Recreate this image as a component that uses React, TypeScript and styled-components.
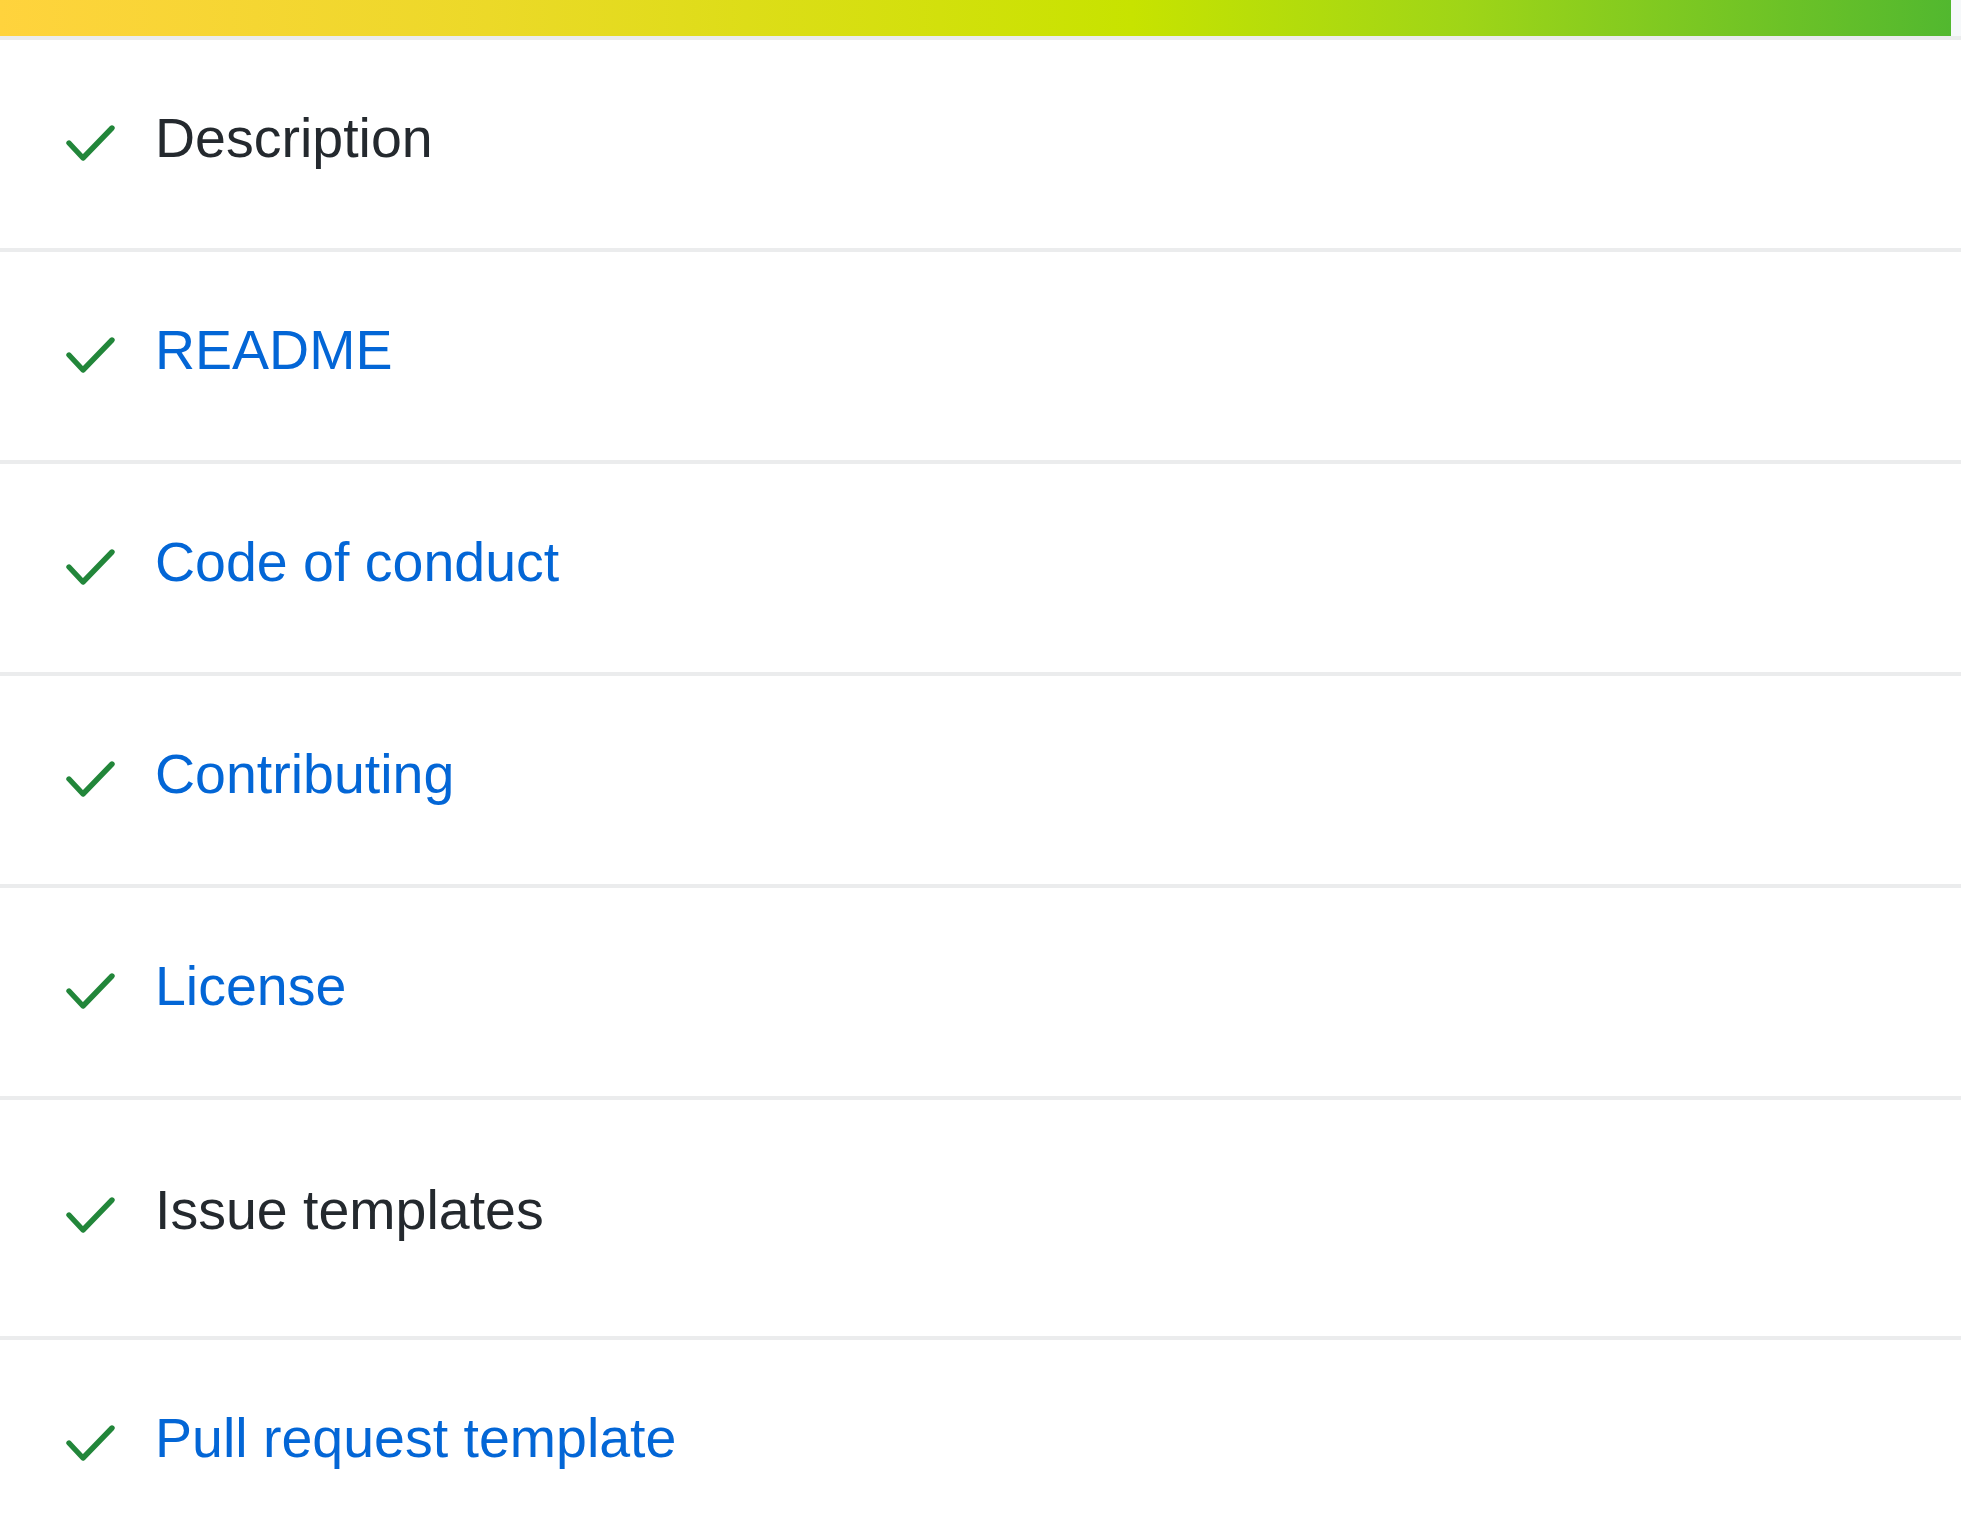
import React from "react";
import styled, { createGlobalStyle } from "styled-components";

const GlobalStyle = createGlobalStyle`
  html, body {
    margin: 0;
    padding: 0;
    background: #ffffff;
    font-family: "Liberation Sans", Arial, Helvetica, sans-serif;
  }
`;

const Page = styled.div`
  display: flex;
  flex-direction: column;
  width: 100%;
`;

const Header = styled.div`
  display: flex;
  height: 36px;
  background: #f6f8fa;
  border-bottom: 4px solid #ebeced;
`;

const ProgressBar = styled.div`
  flex: 1;
  margin-right: 10px;
  background: linear-gradient(
    90deg,
    #ffd33d 0%,
    #ecd928 25%,
    #c7e300 58%,
    #9fd517 75%,
    #52b82f 100%
  );
`;

const List = styled.ul`
  list-style: none;
  margin: 0;
  padding: 0;
`;

const Row = styled.li<{ $tall?: boolean }>`
  display: flex;
  align-items: flex-start;
  gap: 39px;
  padding: ${(p) => (p.$tall ? "78px 0 94px 60px" : "66px 0 78px 60px")};
  border-bottom: 4px solid #ebeced;
`;

const CheckWrap = styled.span`
  display: flex;
  flex: none;
  width: 56px;
  height: 48px;
  margin-top: 14px;
`;

const Label = styled.span<{ $link?: boolean }>`
  font-size: 55.5px;
  line-height: 64px;
  color: ${(p) => (p.$link ? "#0366d6" : "#24292e")};
  white-space: nowrap;
`;

const Check = () => (
  <CheckWrap>
    <svg width="56" height="48" viewBox="0 0 56 48" fill="none">
      <polyline
        points="9,23 23,38 52,8"
        stroke="#22863a"
        strokeWidth="5.4"
        strokeLinecap="round"
        strokeLinejoin="round"
      />
    </svg>
  </CheckWrap>
);

const items: { label: string; link?: boolean; tall?: boolean }[] = [
  { label: "Description" },
  { label: "README", link: true },
  { label: "Code of conduct", link: true },
  { label: "Contributing", link: true },
  { label: "License", link: true },
  { label: "Issue templates", tall: true },
  { label: "Pull request template", link: true },
];

export default function App() {
  return (
    <Page>
      <GlobalStyle />
      <Header>
        <ProgressBar />
      </Header>
      <List>
        {items.map((it) => (
          <Row key={it.label} $tall={it.tall}>
            <Check />
            <Label $link={it.link}>{it.label}</Label>
          </Row>
        ))}
      </List>
    </Page>
  );
}
